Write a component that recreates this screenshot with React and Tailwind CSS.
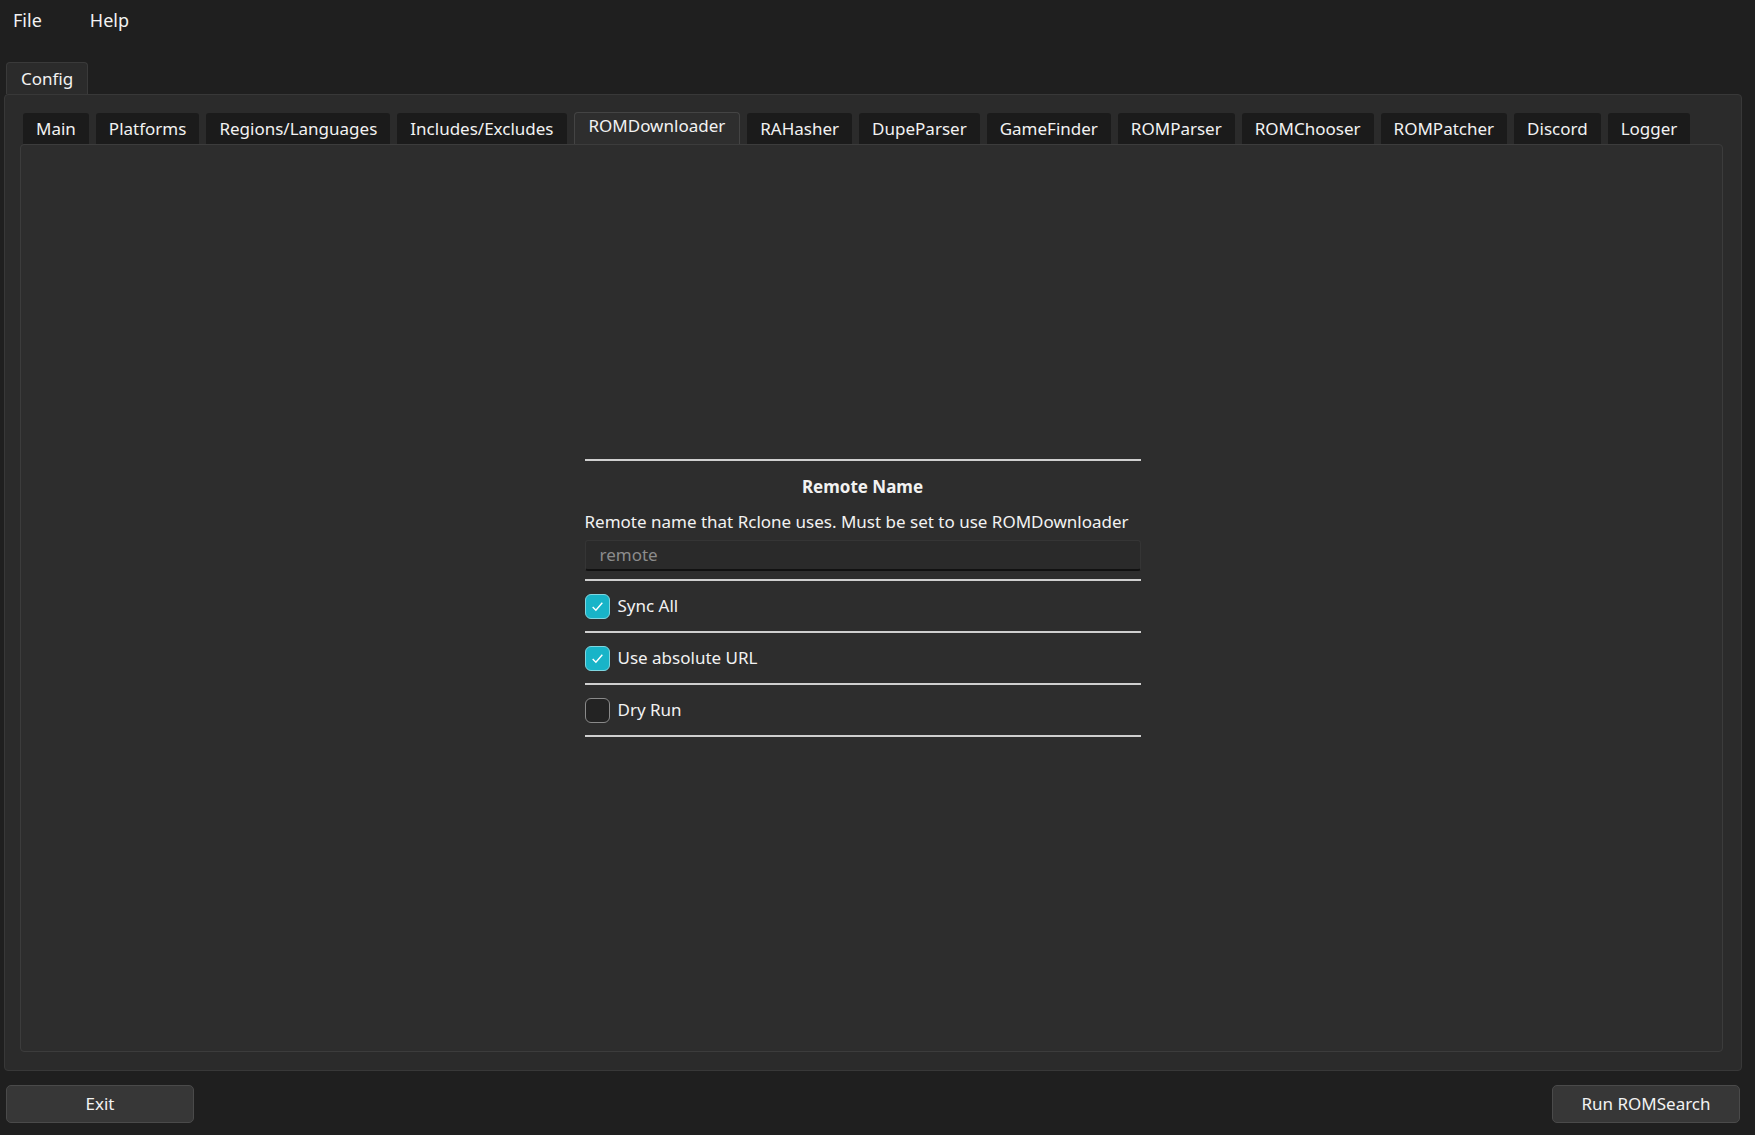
import React, { useState } from 'react';

const tabs = ['Main', 'Platforms', 'Regions/Languages', 'Includes/Excludes', 'ROMDownloader', 'RAHasher', 'DupeParser', 'GameFinder', 'ROMParser', 'ROMChooser', 'ROMPatcher', 'Discord', 'Logger'];

const Check = ({ checked, label, onClick }) => (
    <div className="flex items-center gap-[8px] h-[52px] border-b-2 border-[#cfcfcf]" onClick={onClick}>
        <div className={`w-[25px] h-[25px] rounded-[6px] border flex items-center justify-center ${checked ? 'bg-[#18b4c8] border-[#7fd6e0]' : 'bg-[#232323] border-[#8a8a8a]'}`}>
            {checked && (
                <svg width="15" height="15" viewBox="0 0 14 14" fill="none" stroke="white" strokeWidth="1.3">
                    <path d="M2.5 7.5 L5.5 10.5 L11.5 3.5" />
                </svg>
            )}
        </div>
        <span>{label}</span>
    </div>
);

export default function App() {
    const [sync, setSync] = useState(true);
    const [abs, setAbs] = useState(true);
    const [dry, setDry] = useState(false);

    return (
        <div className="w-[1755px] h-[1135px] bg-[#1f1f1f] text-[#f2f2f2] text-[17px] flex flex-col" style={{ fontFamily: '"Noto Sans", "Open Sans", sans-serif' }}>
            <div className="flex gap-[48px] px-[13px] h-[40px] items-center text-[18px]">
                <span>File</span>
                <span>Help</span>
            </div>
            <div className="px-[6px] mt-[22px]">
                <div className="inline-block bg-[#2b2b2b] border border-b-0 border-[#3a3a3a] rounded-t-[4px] px-[14px] h-[32px] leading-[31px]">Config</div>
            </div>
            <div className="ml-[4px] mr-[13px] h-[977px] bg-[#2b2b2b] border border-[#383838] rounded-[4px] pl-[15px] pr-[18px] pt-[17px] pb-[18px] flex flex-col">
                <div className="flex gap-[7px] px-[3px] h-[32px]">
                    {tabs.map((t) => t === 'ROMDownloader' ? (
                        <div key={t} className="bg-[#2e2e2e] border border-b-0 border-[#444] rounded-t-[4px] px-[14px] h-[32px] leading-[26px]">{t}</div>
                    ) : (
                        <div key={t} className="bg-[#1b1b1b] px-[13px] mt-[1px] h-[31px] leading-[31px] rounded-t-[3px]">{t}</div>
                    ))}
                </div>
                <div className="flex-1 bg-[#2d2d2d] border border-[#3c3c3c] rounded-[4px] flex items-center justify-center">
                    <div className="w-[556px] flex flex-col border-t-2 border-[#cfcfcf] mr-[18px]">
                        <div className="text-center font-bold mt-[13px] text-[17px]">Remote Name</div>
                        <div className="mt-[9px] whitespace-nowrap">Remote name that Rclone uses. Must be set to use ROMDownloader</div>
                        <div className="mt-[6px] h-[31px] bg-[#2a2a2a] border border-[#353535] border-b-2 border-b-[#111] rounded-[3px] px-[14px] text-[#8c8c8c] leading-[28px]">remote</div>
                        <div className="h-[10px] border-b-2 border-[#cfcfcf]" />
                        <Check checked={sync} label="Sync All" onClick={() => setSync(!sync)} />
                        <Check checked={abs} label="Use absolute URL" onClick={() => setAbs(!abs)} />
                        <Check checked={dry} label="Dry Run" onClick={() => setDry(!dry)} />
                    </div>
                </div>
            </div>
            <div className="flex justify-between pl-[6px] pr-[15px] mt-[14px]">
                <button className="w-[188px] h-[38px] bg-[#373737] border border-[#4a4a4a] rounded-[5px]">Exit</button>
                <button className="w-[188px] h-[38px] bg-[#373737] border border-[#4a4a4a] rounded-[5px]">Run ROMSearch</button>
            </div>
        </div>
    );
}
